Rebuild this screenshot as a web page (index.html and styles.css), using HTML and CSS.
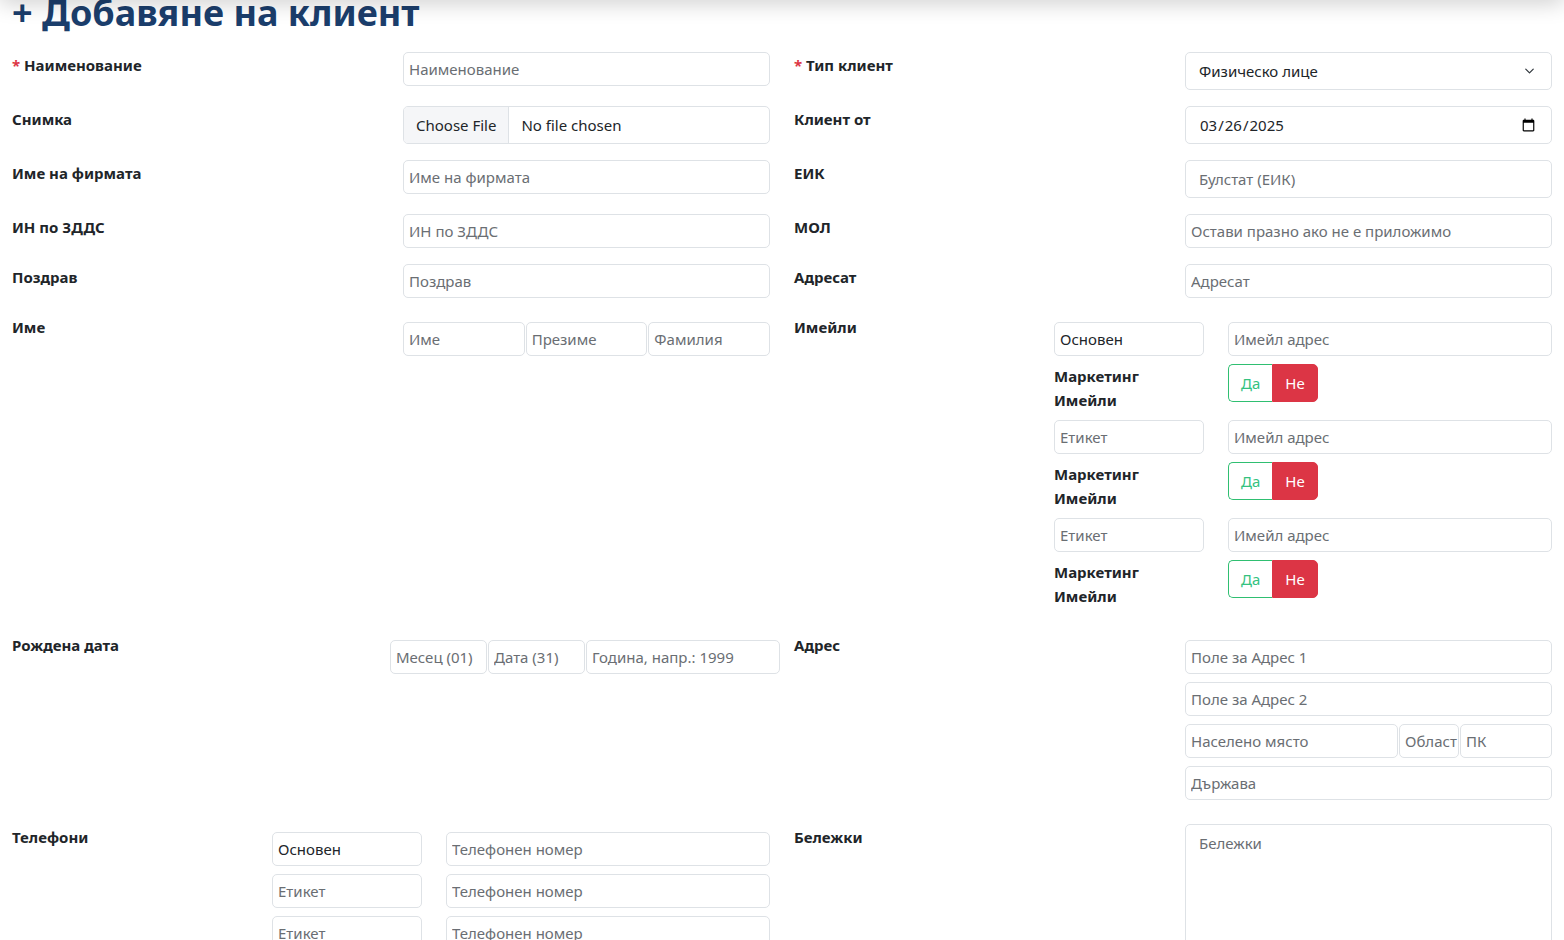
FILE: index.html
```html
<!DOCTYPE html>
<html lang="bg">
  <head>
    <meta charset="UTF-8" />
    <meta name="viewport" content="width=device-width, initial-scale=1.0" />
    <title>Добавяне на клиент</title>
    <link rel="stylesheet" href="styles.css">
  </head>
  <body>
    <div class="top-shadow"></div>

    <main class="page">
      <h1 class="page-title"><span class="plus">+</span> Добавяне на клиент</h1>

      <form class="client-form">
        <!-- name / type -->
        <div class="form-row">
          <div class="half">
            <label class="field-label"><span class="req">*</span> Наименование</label>
            <input type="text" class="input sm" placeholder="Наименование" />
          </div>
          <div class="half">
            <label class="field-label"><span class="req">*</span> Тип клиент</label>
            <select class="input lg select">
              <option>Физическо лице</option>
              <option>Юридическо лице</option>
            </select>
          </div>
        </div>

        <div class="form-row">
          <div class="half">
            <label class="field-label">Снимка</label>
            <input type="file" class="input file" />
          </div>
          <div class="half">
            <label class="field-label">Клиент от</label>
            <input type="date" class="input lg" value="2025-03-26" />
          </div>
        </div>

        <div class="form-row">
          <div class="half">
            <label class="field-label">Име на фирмата</label>
            <input type="text" class="input sm" placeholder="Име на фирмата" />
          </div>
          <div class="half">
            <label class="field-label">ЕИК</label>
            <input type="text" class="input lg" placeholder="Булстат (ЕИК)" />
          </div>
        </div>

        <div class="form-row">
          <div class="half">
            <label class="field-label">ИН по ЗДДС</label>
            <input type="text" class="input sm" placeholder="ИН по ЗДДС" />
          </div>
          <div class="half">
            <label class="field-label">МОЛ</label>
            <input type="text" class="input sm" placeholder="Остави празно ако не е приложимо" />
          </div>
        </div>

        <div class="form-row">
          <div class="half">
            <label class="field-label">Поздрав</label>
            <input type="text" class="input sm" placeholder="Поздрав" />
          </div>
          <div class="half">
            <label class="field-label">Адресат</label>
            <input type="text" class="input sm" placeholder="Адресат" />
          </div>
        </div>

        <!-- person name / emails -->
        <div class="form-row">
          <div class="half">
            <label class="field-label">Име</label>
            <div class="name-group">
              <input type="text" class="input sm" placeholder="Име" />
              <input type="text" class="input sm" placeholder="Презиме" />
              <input type="text" class="input sm" placeholder="Фамилия" />
            </div>
          </div>
          <div class="half wide">
            <label class="field-label">Имейли</label>
            <div class="multi">
              <div class="multi-row">
                <input type="text" class="input sm" value="Основен" />
                <input type="email" class="input sm" placeholder="Имейл адрес" />
              </div>
              <div class="multi-row tall">
                <span class="sub-label">Маркетинг Имейли</span>
                <div class="toggle">
                  <button type="button" class="toggle-yes">Да</button>
                  <button type="button" class="toggle-no">Не</button>
                </div>
              </div>
              <div class="multi-row">
                <input type="text" class="input sm" placeholder="Етикет" />
                <input type="email" class="input sm" placeholder="Имейл адрес" />
              </div>
              <div class="multi-row tall">
                <span class="sub-label">Маркетинг Имейли</span>
                <div class="toggle">
                  <button type="button" class="toggle-yes">Да</button>
                  <button type="button" class="toggle-no">Не</button>
                </div>
              </div>
              <div class="multi-row">
                <input type="text" class="input sm" placeholder="Етикет" />
                <input type="email" class="input sm" placeholder="Имейл адрес" />
              </div>
              <div class="multi-row tall">
                <span class="sub-label">Маркетинг Имейли</span>
                <div class="toggle">
                  <button type="button" class="toggle-yes">Да</button>
                  <button type="button" class="toggle-no">Не</button>
                </div>
              </div>
            </div>
          </div>
        </div>

        <!-- birthday / address -->
        <div class="form-row">
          <div class="half">
            <label class="field-label">Рождена дата</label>
            <div class="birth-group">
              <input type="text" class="input sm" placeholder="Месец (01)" />
              <input type="text" class="input sm" placeholder="Дата (31)" />
              <input type="text" class="input sm" placeholder="Година, напр.: 1999" />
            </div>
          </div>
          <div class="half">
            <label class="field-label">Адрес</label>
            <div class="address-group">
              <input type="text" class="input sm" placeholder="Поле за Адрес 1" />
              <input type="text" class="input sm" placeholder="Поле за Адрес 2" />
              <div class="city-line">
                <input type="text" class="input sm" placeholder="Населено място" />
                <input type="text" class="input sm" placeholder="Област" />
                <input type="text" class="input sm" placeholder="ПК" />
              </div>
              <input type="text" class="input sm" placeholder="Държава" />
            </div>
          </div>
        </div>

        <!-- phones / notes -->
        <div class="form-row">
          <div class="half wide">
            <label class="field-label">Телефони</label>
            <div class="multi">
              <div class="multi-row">
                <input type="text" class="input sm" value="Основен" />
                <input type="tel" class="input sm" placeholder="Телефонен номер" />
              </div>
              <div class="multi-row">
                <input type="text" class="input sm" placeholder="Етикет" />
                <input type="tel" class="input sm" placeholder="Телефонен номер" />
              </div>
              <div class="multi-row">
                <input type="text" class="input sm" placeholder="Етикет" />
                <input type="tel" class="input sm" placeholder="Телефонен номер" />
              </div>
            </div>
          </div>
          <div class="half">
            <label class="field-label">Бележки</label>
            <textarea class="input notes" placeholder="Бележки"></textarea>
          </div>
        </div>
      </form>
    </main>
  </body>
</html>
```

FILE: styles.css
```css
body {
  font-family: "Noto Sans", "Open Sans", sans-serif;
  background-color: #fff;
  color: #212529;
  margin: 0;
  padding: 0;
}

/* shadow left by the fixed header above the page */
.top-shadow {
  position: fixed;
  top: -20px;
  left: 0;
  right: 0;
  height: 20px;
  box-shadow: 0 2px 22px rgba(0, 0, 0, 0.22);
  z-index: 10;
}

.page {
  padding: 0 12px 40px;
}

.page-title {
  font-family: "Noto Sans", sans-serif;
  font-size: 36px;
  font-weight: 700;
  color: #1b3e6c;
  margin: -9px 0 0;
  line-height: 44px;
  height: 61px;
}

.page-title .plus {
  font-weight: 700;
}

.form-row {
  display: grid;
  grid-template-columns: 1fr 1fr;
  column-gap: 24px;
  margin-bottom: 16px;
}

.half {
  display: grid;
  grid-template-columns: 1fr 1fr;
  column-gap: 24px;
  align-items: start;
}

.half.wide {
  grid-template-columns: 236px 1fr;
}

.field-label {
  font-size: 15px;
  font-weight: 700;
  line-height: 24px;
  padding-top: 1px;
}

.req {
  color: #dc3545;
}

.input {
  display: block;
  width: 100%;
  box-sizing: border-box;
  font-family: inherit;
  font-size: 15px;
  color: #212529;
  background-color: #fff;
  border: 1px solid #dee2e6;
  border-radius: 5px;
  margin: 0;
}

.input::placeholder {
  color: #6a6e73;
}

.input.sm {
  height: 34px;
  padding: 4px 5px;
}

.input.lg {
  height: 38px;
  padding: 6px 13px;
}

.input.select {
  appearance: none;
  background-image: url("data:image/svg+xml,%3csvg xmlns='http://www.w3.org/2000/svg' viewBox='0 0 16 16'%3e%3cpath fill='none' stroke='%23343a40' stroke-linecap='round' stroke-linejoin='round' stroke-width='2' d='m2 5 6 6 6-6'/%3e%3c/svg%3e");
  background-repeat: no-repeat;
  background-position: right 15px center;
  background-size: 13px 10px;
}

.input.file {
  height: 38px;
  padding: 0;
  overflow: hidden;
}

.input.file::file-selector-button {
  height: 36px;
  padding: 0 12px;
  margin: 0 12px 0 0;
  font-family: inherit;
  font-size: 15px;
  color: #212529;
  background-color: #f5f6f8;
  border: 0;
  border-right: 1px solid #dee2e6;
  border-radius: 0;
}

.name-group {
  display: flex;
  gap: 1px;
  padding-top: 8px;
}

.name-group .input {
  flex: 1;
  min-width: 0;
}

.birth-group {
  display: grid;
  grid-template-columns: 1fr 1fr 2fr;
  gap: 1px;
  padding-top: 8px;
  margin: 0 -10px 0 -13px;
}

.birth-group .input {
  padding-left: 5px;
}

.address-group {
  display: flex;
  flex-direction: column;
  gap: 8px;
  padding: 8px 0;
}

.city-line {
  display: grid;
  grid-template-columns: 213px 60px 1fr;
  gap: 1px;
}

.city-line .input {
  padding-right: 0;
}

.multi-row {
  display: grid;
  grid-template-columns: 150px 1fr;
  column-gap: 24px;
  align-items: start;
  margin: 8px 0;
}

.multi-row.tall {
  height: 48px;
}

.sub-label {
  font-size: 15px;
  font-weight: 700;
  line-height: 24px;
}

.toggle {
  display: flex;
}

.toggle button {
  font-family: inherit;
  font-size: 15px;
  height: 38px;
  padding: 0 12px;
  cursor: pointer;
}

.toggle-yes {
  color: #34c27f;
  background-color: #fff;
  border: 1px solid #2fbf71;
  border-right: none;
  border-radius: 5px 0 0 5px;
  width: 44px;
}

.toggle-no {
  color: #fff;
  background-color: #dc3545;
  border: 1px solid #dc3545;
  border-radius: 0 5px 5px 0;
  width: 46px;
}

.input.notes {
  height: 150px;
  padding: 8px 13px;
  resize: vertical;
}
```
